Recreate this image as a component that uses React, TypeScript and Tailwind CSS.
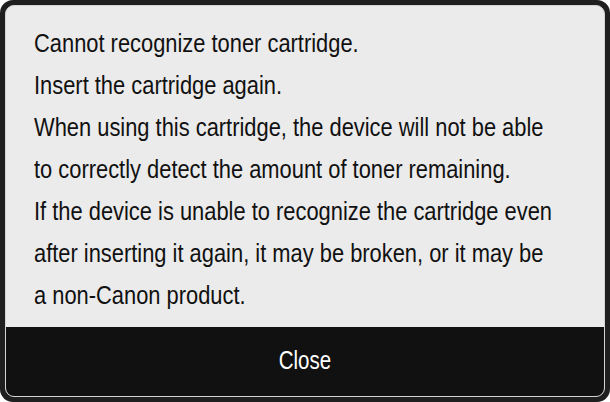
import React from "react";

const lines = [
  "Cannot recognize toner cartridge.",
  "Insert the cartridge again.",
  "When using this cartridge, the device will not be able",
  "to correctly detect the amount of toner remaining.",
  "If the device is unable to recognize the cartridge even",
  "after inserting it again, it may be broken, or it may be",
  "a non-Canon product.",
];

export default function App() {
  return (
    <div
      className="w-[610px] h-[402px] bg-white"
      style={{ fontFamily: '"Liberation Sans", Arial, sans-serif' }}
    >
      <div className="w-full h-full rounded-[13px] bg-[#1f1f1f] p-[5px]">
        <div className="h-full rounded-[9px] border border-[#d4d4d4] bg-[#ebebeb] overflow-hidden flex flex-col">
          <div className="flex-1 pt-[16px] pl-[28px] text-[25px] leading-[42px] text-[#111]">
            {lines.map((l) => (
              <div key={l} className="whitespace-nowrap origin-left scale-x-[0.875]">
                {l}
              </div>
            ))}
          </div>
          <div className="h-[69px] bg-[#111] flex items-center justify-center text-white text-[25px]">
            <span className="scale-x-[0.82] pb-[1px]">Close</span>
          </div>
        </div>
      </div>
    </div>
  );
}
